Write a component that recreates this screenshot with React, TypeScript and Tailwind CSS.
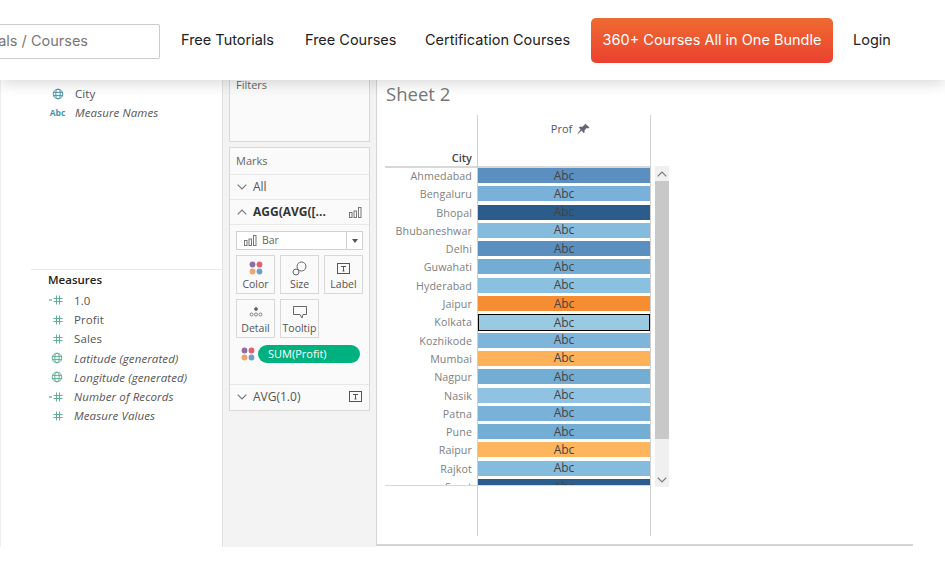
const sans = "font-['Open_Sans','Liberation_Sans',sans-serif]";
const nav = "font-['Inter','Liberation_Sans',sans-serif]";

const rows = [
  ["Ahmedabad", "bg-[#5b8fbf]"],
  ["Bengaluru", "bg-[#7ab1d8]"],
  ["Bhopal", "bg-[#2b5c8c]"],
  ["Bhubaneshwar", "bg-[#85bbdd]"],
  ["Delhi", "bg-[#5b8fbf]"],
  ["Guwahati", "bg-[#74add4]"],
  ["Hyderabad", "bg-[#8ac0e0]"],
  ["Jaipur", "bg-[#f68d33]"],
  ["Kolkata", "bg-[#9ac9e2]"],
  ["Kozhikode", "bg-[#7fb5da]"],
  ["Mumbai", "bg-[#fdb158]"],
  ["Nagpur", "bg-[#74add4]"],
  ["Nasik", "bg-[#90c3e3]"],
  ["Patna", "bg-[#7ab1d8]"],
  ["Pune", "bg-[#74add4]"],
  ["Raipur", "bg-[#fdb55e]"],
  ["Rajkot", "bg-[#85bbdd]"],
  ["Surat", "bg-[#2b5c8c]"],
];

function Globe({ color }: { color: string }) {
  return (
    <svg width="12" height="12" viewBox="0 0 12 12" fill="none" stroke={color} strokeWidth="1">
      <circle cx="6" cy="6" r="4.8" />
      <ellipse cx="6" cy="6" rx="2.2" ry="4.8" />
      <path d="M1.2 4.4h9.6M1.2 7.6h9.6" />
    </svg>
  );
}

function Hash({ dash }: { dash?: boolean }) {
  return (
    <svg width="16" height="12" viewBox="0 0 16 12" fill="none" stroke="#5fb094" strokeWidth="1">
      <path d="M7.500 1.500v9M10.500 1.500v9M4.500 4.500h9M4.500 7.500h9" />
      {dash && <path d="M0 6h3" strokeWidth="2" strokeOpacity="0.7" />}
    </svg>
  );
}

function Dots() {
  return (
    <svg width="14" height="14" viewBox="0 0 14 14">
      <circle cx="3.5" cy="3.5" r="2.9" fill="#8d6fa3" />
      <circle cx="10.5" cy="3.5" r="2.9" fill="#e4606d" />
      <circle cx="3.5" cy="10.5" r="2.9" fill="#f2a26b" />
      <circle cx="10.5" cy="10.5" r="2.9" fill="#6f9fc9" />
    </svg>
  );
}

function Bars() {
  return (
    <svg width="13" height="11" viewBox="0 0 13 11" fill="none" stroke="#777" strokeWidth="1">
      <rect x="0.5" y="5.5" width="2.5" height="5" />
      <rect x="5" y="4" width="2.5" height="6.5" />
      <rect x="9.5" y="0.5" width="2.5" height="10" />
    </svg>
  );
}

function TBox() {
  return (
    <svg width="13" height="11" viewBox="0 0 13 11" fill="none" stroke="#555" strokeWidth="1">
      <rect x="0.5" y="0.5" width="12" height="10" />
      <path d="M4 3.500h5M6.500 3.500v4.500M5.500 8h2" />
    </svg>
  );
}

function Chevron({ up }: { up?: boolean }) {
  return (
    <svg width="10" height="6" viewBox="0 0 10 6" fill="none" stroke="#777" strokeWidth="1.2">
      <path d={up ? "M0.7 5.300 5 1l4.300 4.300" : "M0.7 0.7 5 5l4.300-4.300"} />
    </svg>
  );
}

function MarkButton({ label, children }: { label: string; children: React.ReactNode }) {
  return (
    <div className="flex h-[39px] w-[39px] flex-col items-center border border-[#d8d8d8] bg-[#fafafa]">
      <div className="flex h-[21px] items-center pt-[3px]">{children}</div>
      <span className="text-[10.5px] leading-[15px] text-[#555]">{label}</span>
    </div>
  );
}

function FieldRow({ icon, label, italic }: { icon: React.ReactNode; label: string; italic?: boolean }) {
  return (
    <div className="flex h-[19.3px] items-center">
      <div className="flex w-[27px] justify-center">{icon}</div>
      <span className={`ml-[4px] text-[11.5px] tracking-[0.1px] text-[#555] ${italic ? "italic" : ""}`}>{label}</span>
    </div>
  );
}

export default function App() {
  return (
    <div className={`h-[565px] w-[945px] overflow-hidden bg-white ${sans}`}>
      <header className={`relative z-10 flex h-20 items-center bg-white shadow-[0_3px_14px_rgba(0,0,0,0.16)] ${nav}`}>
        <div className="mt-[2px] flex h-[35px] w-[160px] items-center justify-end rounded-r-[2px] border border-l-0 border-[#ccc] pr-[71px]">
          <span className="text-[14.5px] whitespace-nowrap text-[#777]">als / Courses</span>
        </div>
        <nav className="ml-[21px] flex items-center text-[14.5px] whitespace-nowrap text-[#222]">
          <span className="w-[124px]">Free Tutorials</span>
          <span className="w-[120px]">Free Courses</span>
          <span className="w-[166px]">Certification Courses</span>
          <button className="flex h-[45px] w-[242px] items-center justify-center rounded-[5px] bg-linear-to-b from-[#ee6a31] to-[#eb3f30] text-[14.5px] text-white">
            360+ Courses All in One Bundle
          </button>
          <span className="ml-[20px]">Login</span>
        </nav>
      </header>

      <main className="flex h-[467px] items-stretch border-l border-[#eee] bg-white">
        <aside className="flex w-[222px] shrink-0 flex-col border-r border-[#e2e2e2]">
          <div className="pt-[4px] pl-[43px]">
            <FieldRow icon={<Globe color="#4d94ad" />} label="City" />
            <FieldRow icon={<span className="text-[8.5px] font-bold text-[#4d94ad]">Abc</span>} label="Measure Names" italic />
          </div>
          <div className="mt-[146px] ml-[30px] border-t border-[#e8e8e8] pt-[1px] pl-[12px]">
            <div className="mb-[3px] pl-[5px] text-[11.5px] leading-[17px] font-semibold text-[#222]">Measures</div>
            <FieldRow icon={<Hash dash />} label="1.0" />
            <FieldRow icon={<Hash />} label="Profit" />
            <FieldRow icon={<Hash />} label="Sales" />
            <FieldRow icon={<Globe color="#5fb094" />} label="Latitude (generated)" italic />
            <FieldRow icon={<Globe color="#5fb094" />} label="Longitude (generated)" italic />
            <FieldRow icon={<Hash dash />} label="Number of Records" italic />
            <FieldRow icon={<Hash />} label="Measure Values" italic />
          </div>
        </aside>

        <section className="flex w-[153px] shrink-0 flex-col bg-[#f3f3f3] px-[6px]">
          <div className="h-[62px] border-x border-b border-[#d8d8d8] bg-[#fafafa] px-[6px] text-[11px] leading-[10px] text-[#666]">Filters</div>
          <div className="mt-[5px] h-[264px] border border-[#d8d8d8] bg-[#fafafa] text-[#555]">
            <div className="flex h-[26px] items-center px-[6px] text-[11px] text-[#666]">Marks</div>
            <div className="flex h-[25px] items-center gap-[6px] border-t border-[#e8e8e8] px-[7px] text-[12px]">
              <Chevron /> All
            </div>
            <div className="flex h-[25px] items-center gap-[6px] border-t border-[#e8e8e8] px-[7px] text-[12px] font-bold text-[#333]">
              <Chevron up /> <span className="flex-1">AGG(AVG([...</span> <Bars />
            </div>
            <div className="border-t border-[#e8e8e8] px-[6px] pt-[6px]">
              <div className="flex h-[19px] items-center border border-[#d0d0d0] bg-white pl-[7px] text-[10.5px] text-[#666]">
                <Bars />
                <span className="ml-[5px] flex-1">Bar</span>
                <span className="flex h-full w-[16px] items-center justify-center border-l border-[#d0d0d0]">
                  <span className="h-0 w-0 border-x-[3.5px] border-t-[4px] border-x-transparent border-t-[#555]" />
                </span>
              </div>
              <div className="mt-[5px] grid grid-cols-[39px_39px_39px] gap-x-[5px] gap-y-[5px]">
                <MarkButton label="Color"><Dots /></MarkButton>
                <MarkButton label="Size">
                  <svg width="15" height="15" viewBox="0 0 15 15" fill="none" stroke="#666">
                    <circle cx="9.500" cy="5.500" r="4.500" />
                    <circle cx="4" cy="11" r="3" fill="#fafafa" />
                  </svg>
                </MarkButton>
                <MarkButton label="Label"><TBox /></MarkButton>
                <MarkButton label="Detail">
                  <svg width="14" height="12" viewBox="0 0 14 12" fill="none" stroke="#666" strokeWidth="0.8">
                    <circle cx="7" cy="3" r="1.500" fill="#666" />
                    <circle cx="2.500" cy="8.500" r="1.500" />
                    <circle cx="7" cy="8.500" r="1.500" />
                    <circle cx="11.500" cy="8.500" r="1.500" />
                  </svg>
                </MarkButton>
                <MarkButton label="Tooltip">
                  <svg width="14" height="13" viewBox="0 0 14 13" fill="none" stroke="#666">
                    <path d="M0.500 0.500h13v8h-3.500l-1 3.500-2-3.500h-6.500z" />
                  </svg>
                </MarkButton>
              </div>
              <div className="mt-[7px] flex items-center gap-[3px] pl-[5px]">
                <Dots />
                <div className="flex h-[18px] w-[102px] items-center rounded-full bg-[#00b180] pl-[10px] text-[11px] text-white">SUM(Profit)</div>
              </div>
            </div>
            <div className="mt-[21px] flex h-[24px] items-center gap-[6px] border-t border-[#e8e8e8] px-[7px] text-[12px]">
              <Chevron /> <span className="flex-1">AVG(1.0)</span> <TBox />
            </div>
          </div>
        </section>

        <section className="flex h-[466px] w-[537px] shrink-0 flex-col border-b-2 border-l border-[#d4d4d4]">
          <div className="h-[35px] pt-[1px] pl-[9px] text-[18.5px] leading-[26px] text-[#777]">Sheet 2</div>
          <div className="flex h-[421px]">
            <div className="w-[100px] shrink-0 pl-[8px]">
              <div className="h-[51px] pr-[5px] text-right text-[11px] leading-[16px] font-semibold text-[#444]">
                <div className="pt-[35px]">City</div>
              </div>
              <div className="h-[320px] overflow-hidden border-y border-t-2 border-[#d8d8d8]">
                {rows.map(([city]) => (
                  <div key={city} className="h-[18.31px] pr-[5px] text-right text-[10.7px] leading-[16px] tracking-[0.1px] text-[#808080]">{city}</div>
                ))}
              </div>
            </div>
            <div className="w-[174px] shrink-0 border-x border-[#cfcfcf]">
              <div className="flex h-[51px] items-start justify-center gap-[5px] pt-[6px] pl-[13px] text-[11px] font-medium text-[#555]">
                Prof
                <svg className="mt-[2px]" width="13" height="12" viewBox="0 0 13 12" fill="#667">
                  <path d="M8 0.500 12.500 4.500 11 5.500 9.500 5 7.500 7.500 7.500 9.500 6.500 10 4.500 7.500 1 11 0.500 10.500 3.500 6.500 2 4.500 3 3.500 5 4 7.500 2z" />
                </svg>
              </div>
              <div className="h-[320px] overflow-hidden border-y border-t-2 border-[#d8d8d8]">
                {rows.map(([city, color]) => (
                  <div key={city} className="flex h-[18.31px] items-start">
                    <div className={`flex w-full items-center justify-center text-[12px] text-[#444] ${color} ${city === "Kolkata" ? "h-[17px] border border-black" : "h-[15px]"}`}>Abc</div>
                  </div>
                ))}
              </div>
            </div>
            <div className="mt-[51px] ml-[4px] flex h-[321px] w-[14px] shrink-0 flex-col items-center self-start bg-[#f0f0f0]">
              <div className="flex h-[15px] items-center"><Chevron up /></div>
              <div className="h-[258px] w-full bg-[#c8c8c8]" />
              <div className="flex flex-1 items-end pb-[4px]"><Chevron /></div>
            </div>
          </div>
        </section>
      </main>
    </div>
  );
}
